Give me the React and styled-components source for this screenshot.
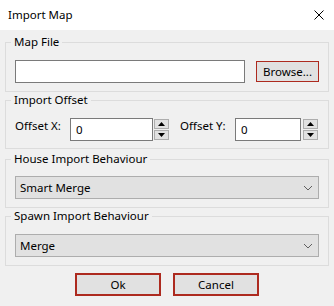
import React from 'react';
import styled, { createGlobalStyle } from 'styled-components';

const GlobalStyle = createGlobalStyle`
  html, body {
    margin: 0;
    padding: 0;
    background: #f0f0f0;
  }
  body {
    font-family: "Segoe UI", "Noto Sans", sans-serif;
    font-size: 11.5px;
    color: #000;
  }
`;

const Window = styled.div`
  width: 334px;
  height: 306px;
  background: #f0f0f0;
  display: flex;
  flex-direction: column;
  overflow: hidden;
`;

const TitleBar = styled.div`
  height: 30px;
  background: #fff;
  display: flex;
  align-items: center;
  justify-content: space-between;
  padding: 0 10px 0 8px;
  box-sizing: border-box;
  line-height: 16px;
`;

const Body = styled.div`
  display: flex;
  flex-direction: column;
  padding: 4px 5px 0;
`;

const Group = styled.fieldset`
  margin: ${p => p.$gap || 0}px 0 0;
  padding: ${p => p.$top || 10}px 9px ${p => p.$bottom || 7}px 9px;
  border: 1px solid #dcdcdc;
  min-width: 0;
`;

const Legend = styled.legend`
  margin-left: -4px;
  padding: 0 3px 0 3px;
  line-height: 16px;
  font-size: 11.5px;
`;

const Row = styled.div`
  display: flex;
  align-items: ${p => p.$align || 'center'};
`;

const TextBox = styled.div`
  box-sizing: border-box;
  height: 23px;
  width: ${p => (p.$w ? `${p.$w}px` : 'auto')};
  flex: ${p => (p.$w ? 'none' : '1')};
  background: #fff;
  border: 1px solid #7a7a7a;
  padding: 0 5px;
  display: flex;
  align-items: center;
`;

const Button = styled.div`
  box-sizing: border-box;
  width: ${p => p.$w}px;
  height: ${p => p.$h || 23}px;
  margin-left: ${p => p.$ml || 0}px;
  background: #e1e1e1;
  border: ${p => p.$thick ? 2 : 1}px solid #ad2a1f;
  display: flex;
  align-items: center;
  justify-content: center;
`;

const FieldLabel = styled.div`
  width: 55px;
  flex: none;
  line-height: 16px;
  margin-left: ${p => p.$ml || 0}px;
`;

const Spinner = styled.div`
  display: flex;
  flex-direction: column;
  gap: 1px;
  margin-left: ${p => p.$ml || 1}px;
  padding-top: 1px;
`;

const SpinButton = styled.div`
  box-sizing: border-box;
  width: 15px;
  height: 10px;
  background: #e1e1e1;
  border: 1px solid #adadad;
  display: flex;
  align-items: center;
  justify-content: center;
`;

const Combo = styled.div`
  box-sizing: border-box;
  height: 23px;
  background: #e1e1e1;
  border: 1px solid #adadad;
  display: flex;
  align-items: center;
  justify-content: space-between;
  padding: 0 5px 0 4px;
`;

const Footer = styled.div`
  display: flex;
  justify-content: center;
  gap: 12px;
  margin-top: 7px;
`;

const Tri = ({ up }) => (
  <svg width="7" height="4" viewBox="0 0 7 4">
    <polygon points={up ? '0,4 7,4 3.5,0' : '0,0 7,0 3.5,4'} fill="#000" />
  </svg>
);

const Chevron = () => (
  <svg width="10" height="6" viewBox="0 0 10 6">
    <polyline points="1,1 5,5 9,1" fill="none" stroke="#606060" strokeWidth="1" />
  </svg>
);

const Close = () => (
  <svg width="10" height="10" viewBox="0 0 10 10">
    <path d="M0.5 0.5 L9.5 9.5 M9.5 0.5 L0.5 9.5" stroke="#000" strokeWidth="1" />
  </svg>
);

const Spin = ({ ml }) => (
  <Spinner $ml={ml}>
    <SpinButton><Tri up /></SpinButton>
    <SpinButton><Tri /></SpinButton>
  </Spinner>
);

export default function App() {
  return (
    <Window>
      <GlobalStyle />
      <TitleBar>
        <span>Import Map</span>
        <Close />
      </TitleBar>
      <Body>
        <Group $top={10} $bottom={8}>
          <Legend>Map File</Legend>
          <Row>
            <TextBox />
            <Button $w={63} $h={21} $ml={11}>Browse...</Button>
          </Row>
        </Group>
        <Group $top={10} $bottom={7}>
          <Legend>Import Offset</Legend>
          <Row $align="flex-start">
            <FieldLabel>Offset X:</FieldLabel>
            <TextBox $w={83}>0</TextBox>
            <Spin ml={1} />
            <FieldLabel $ml={11}>Offset Y:</FieldLabel>
            <TextBox $w={66}>0</TextBox>
            <Spin ml={2} />
          </Row>
        </Group>
        <Group $gap={2} $top={9} $bottom={8}>
          <Legend>House Import Behaviour</Legend>
          <Combo>
            <span>Smart Merge</span>
            <Chevron />
          </Combo>
        </Group>
        <Group $top={10} $bottom={8}>
          <Legend>Spawn Import Behaviour</Legend>
          <Combo>
            <span>Merge</span>
            <Chevron />
          </Combo>
        </Group>
        <Footer>
          <Button $w={86} $thick>Ok</Button>
          <Button $w={86} $thick>Cancel</Button>
        </Footer>
      </Body>
    </Window>
  );
}
